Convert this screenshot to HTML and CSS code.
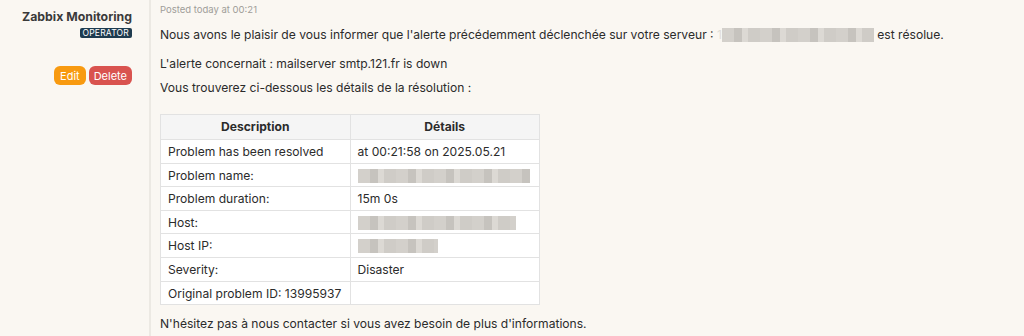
FILE: index.html
```html
<!DOCTYPE html>
<html lang="fr">
<head>
  <meta charset="UTF-8">
  <meta name="viewport" content="width=device-width, initial-scale=1.0">
  <title>Réponse du ticket</title>
  <link rel="stylesheet" href="styles.css">
</head>
<body>
  <div class="post">
    <div class="author">
      <div class="author-name">Zabbix Monitoring</div>
      <span class="badge">OPERATOR</span>
      <div class="actions">
        <button class="btn btn-edit">Edit</button>
        <button class="btn btn-delete">Delete</button>
      </div>
    </div>

    <div class="message">
      <div class="posted">Posted today at 00:21</div>
      <p class="lead">Nous avons le plaisir de vous informer que l'alerte précédemment déclenchée sur votre serveur : <span class="hidden">1</span><span class="redacted" style="width:152px"></span> est résolue.</p>
      <p>L'alerte concernait : mailserver smtp.121.fr is down</p>
      <p>Vous trouverez ci-dessous les détails de la résolution :</p>

      <table class="details">
        <thead>
          <tr><th>Description</th><th>Détails</th></tr>
        </thead>
        <tbody>
          <tr><td>Problem has been resolved</td><td>at 00:21:58 on 2025.05.21</td></tr>
          <tr><td>Problem name:</td><td><span class="redacted" style="width:172px"></span></td></tr>
          <tr><td>Problem duration:</td><td>15m 0s</td></tr>
          <tr><td>Host:</td><td><span class="redacted" style="width:158px"></span></td></tr>
          <tr><td>Host IP:</td><td><span class="redacted" style="width:80px"></span></td></tr>
          <tr><td>Severity:</td><td>Disaster</td></tr>
          <tr><td>Original problem ID: 13995937</td><td></td></tr>
        </tbody>
      </table>

      <p>N'hésitez pas à nous contacter si vous avez besoin de plus d'informations.</p>
    </div>
  </div>
</body>
</html>
```

FILE: styles.css
```css
body {
  margin: 0;
  font-family: Inter, "Noto Sans", sans-serif;
  background-color: #faf7f2;
  color: #2b2b2b;
}
.post {
  display: flex;
  min-height: 336px;
}
.author {
  width: 132px;
  padding: 9px 17px 0 0;
  border-right: 2px solid #ece9e3;
  display: flex;
  flex-direction: column;
  align-items: flex-end;
}
.author-name {
  font-size: 12.3px;
  font-weight: 700;
  color: #3a3a3a;
  line-height: 15px;
}
.badge {
  margin-top: 4px;
  background-color: #1e3b4f;
  color: #fff;
  font-size: 8.5px;
  line-height: 10px;
  padding: 0 3px;
  border-radius: 2px;
  letter-spacing: 0.2px;
}
.actions {
  display: flex;
  gap: 3px;
  margin-top: 28px;
}
.btn {
  border: none;
  border-radius: 6px;
  color: #fff;
  font-family: inherit;
  font-size: 11px;
  height: 19px;
  padding: 0 5px;
}
.btn-edit {
  background-color: #f89a10;
  padding: 0 6px;
}
.btn-delete {
  background-color: #d9534f;
}
.message {
  padding: 4px 0 0 9px;
  font-size: 12.1px;
  line-height: 16px;
}
.posted {
  font-size: 9.5px;
  color: #9f9d99;
  line-height: 12px;
  margin-bottom: 11px;
}
.message p {
  margin: 0 0 8px;
}
.message p.lead {
  margin-bottom: 13px;
}
.hidden {
  color: #e0ddd8;
}
.redacted {
  display: inline-block;
  height: 14px;
  vertical-align: -3px;
  background: repeating-linear-gradient(90deg, #d3d0cb 0 12px, #c6c3be 12px 20px, #dcd9d4 20px 26px, #cfccc7 26px 38px);
}
.details {
  border-collapse: collapse;
  background-color: #fff;
  margin: 18px 0 11px;
  width: 380px;
}
.details th,
.details td {
  border: 1px solid #e2e2e2;
  padding: 4px 7px 3px;
  line-height: 15.6px;
  text-align: left;
  width: 50%;
  white-space: nowrap;
}
.details th {
  background-color: #f5f5f5;
  text-align: center;
  font-weight: 700;
  line-height: 16px;
  padding: 4px 7px;
}
```
